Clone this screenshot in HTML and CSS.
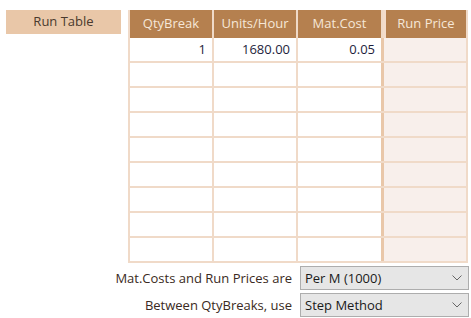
FILE: index.html
```html
<!DOCTYPE html>
<html>
<head>
<meta charset="utf-8">
<link rel="stylesheet" href="styles.css">
</head>
<body>
<div class="page">
  <div class="top">
    <div class="run-btn">Run Table</div>
    <div class="grid">
      <div class="hd">QtyBreak</div>
      <div class="hd">Units/Hour</div>
      <div class="hd">Mat.Cost</div>
      <div class="hd rp">Run Price</div>

      <div class="c">1</div><div class="c">1680.00</div><div class="c">0.05</div><div class="c rp"></div>
      <div class="c"></div><div class="c"></div><div class="c"></div><div class="c rp"></div>
      <div class="c"></div><div class="c"></div><div class="c"></div><div class="c rp"></div>
      <div class="c"></div><div class="c"></div><div class="c"></div><div class="c rp"></div>
      <div class="c"></div><div class="c"></div><div class="c"></div><div class="c rp"></div>
      <div class="c"></div><div class="c"></div><div class="c"></div><div class="c rp"></div>
      <div class="c"></div><div class="c"></div><div class="c"></div><div class="c rp"></div>
      <div class="c"></div><div class="c"></div><div class="c"></div><div class="c rp"></div>
      <div class="c"></div><div class="c"></div><div class="c"></div><div class="c rp"></div>
    </div>
  </div>
  <div class="opts">
    <div class="lbl">Mat.Costs and Run Prices are</div>
    <div class="sel"><span>Per M (1000)</span><svg width="10" height="6" viewBox="0 0 10 6"><path d="M0.5 0.5 L5 5 L9.5 0.5" fill="none" stroke="#666" stroke-width="1"/></svg></div>
    <div class="lbl">Between QtyBreaks, use</div>
    <div class="sel"><span>Step Method</span><svg width="10" height="6" viewBox="0 0 10 6"><path d="M0.5 0.5 L5 5 L9.5 0.5" fill="none" stroke="#666" stroke-width="1"/></svg></div>
  </div>
</div>
</body>
</html>
```
FILE: styles.css
```css
html, body {
  margin: 0;
  padding: 0;
  background: #ffffff;
}
body {
  font-family: "Open Sans", "Noto Sans", sans-serif;
  font-size: 13px;
}
.page {
  width: 471px;
  height: 318px;
  padding: 10px 0 0 6px;
  box-sizing: border-box;
}
.top {
  display: flex;
  align-items: flex-start;
  gap: 7px;
}
.run-btn {
  width: 115px;
  height: 24px;
  line-height: 23px;
  background: #e9c7a8;
  color: #4a3a2e;
  text-align: center;
  font-size: 13px;
}
.grid {
  display: grid;
  grid-template-columns: 82px 82px 83px 83px;
  grid-template-rows: 26px repeat(9, 23px);
  gap: 2px;
  background: #f0dac8;
  padding: 0 2px 2px 2px;
}
.hd {
  background: #b5804f;
  color: #f6e7d8;
  text-align: center;
  line-height: 26px;
  font-size: 13px;
  margin-bottom: -2px;
}
.hd.rp {
  border-left: 3px solid #f3dccb;
}
.c {
  background: #ffffff;
  color: #1e1e3c;
  text-align: right;
  padding-right: 6px;
  line-height: 23px;
  font-size: 13px;
}
.c.rp {
  background: #f8efeb;
  border-left: 3px solid #e9c7a9;
  margin-left: -2px;
  padding-left: 2px;
}
.opts {
  display: grid;
  grid-template-columns: 1fr 169px;
  column-gap: 8px;
  row-gap: 3px;
  margin-top: 3px;
  padding-right: 2px;
  align-items: center;
}
.lbl {
  text-align: right;
  color: #3a2a22;
  font-size: 13px;
}
.sel {
  height: 24px;
  box-sizing: border-box;
  background: #e6e6e6;
  border: 1px solid #adadad;
  display: flex;
  align-items: center;
  justify-content: space-between;
  padding: 0 6px 0 4px;
  color: #1a1a1a;
  font-size: 13px;
}
```
